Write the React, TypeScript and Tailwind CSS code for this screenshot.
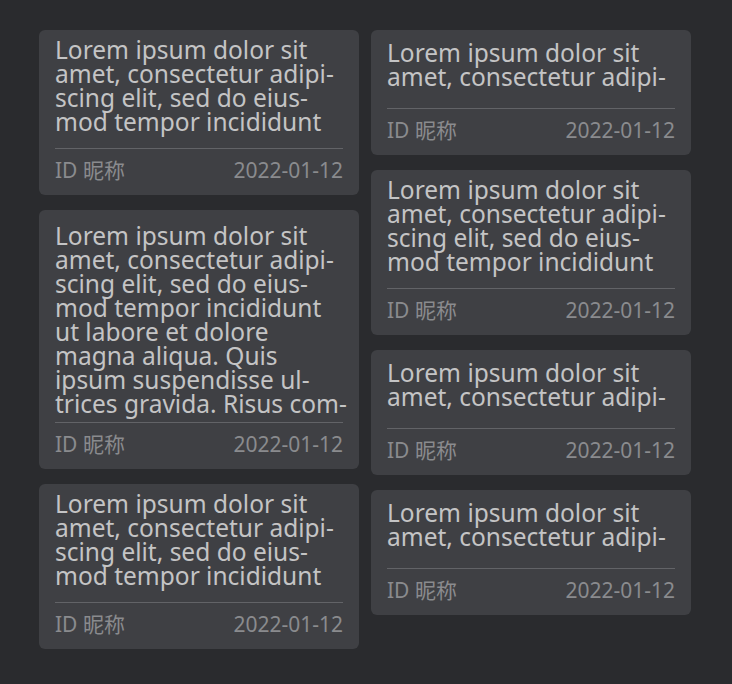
const L1 = 'Lorem ipsum dolor sit';
const L2 = 'amet, consectetur adipi-';
const L3 = 'scing elit, sed do eius-';
const L4 = 'mod tempor incididunt';

type Size = 'short' | 'medium' | 'tall';

const sizeClass: Record<Size, string> = {
  short: 'pt-[11px] h-[48px] mb-[19px]',
  medium: 'pt-[8px] h-[96px] mb-[14px]',
  tall: 'pt-[14px] h-[192px] mb-[6px]',
};

const Card = ({ lines, size }: { lines: string[]; size: Size }) => {
  return (
    <div className="w-[320px] rounded-md bg-[#3f4044] px-4">
      <div className={`box-content text-[24.5px] leading-[24px] text-[#c4c4c5] ${sizeClass[size]}`}>
        {lines.map((line) => (
          <div key={line} className="whitespace-nowrap">
            {line}
          </div>
        ))}
      </div>
      <div className="flex h-[47px] items-start justify-between border-t border-[#626367] text-[21px] leading-[42px] text-[#8a8b8e]">
        <span>ID 昵称</span>
        <span>2022-01-12</span>
      </div>
    </div>
  );
};

const App = () => {
  return (
    <div
      className="flex h-[684px] w-full gap-3 bg-[#2a2b2e] pl-[39px] pt-[30px]"
      style={{ fontFamily: '"Noto Sans", "Noto Sans CJK SC", sans-serif' }}
    >
      <div className="flex flex-col gap-[15px]">
        <Card size="medium" lines={[L1, L2, L3, L4]} />
        <Card
          size="tall"
          lines={[
            L1,
            L2,
            L3,
            L4,
            'ut labore et dolore',
            'magna aliqua. Quis',
            'ipsum suspendisse ul-',
            'trices gravida. Risus com-',
          ]}
        />
        <Card size="medium" lines={[L1, L2, L3, L4]} />
      </div>
      <div className="flex flex-col gap-[15px]">
        <Card size="short" lines={[L1, L2]} />
        <Card size="medium" lines={[L1, L2, L3, L4]} />
        <Card size="short" lines={[L1, L2]} />
        <Card size="short" lines={[L1, L2]} />
      </div>
    </div>
  );
};

export default App;
